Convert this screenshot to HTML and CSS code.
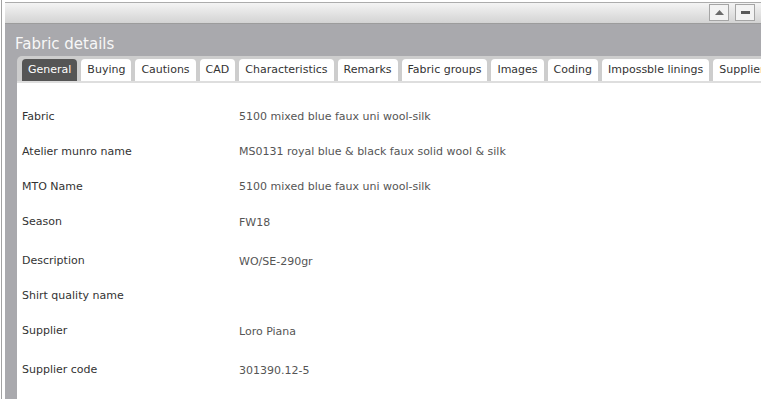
FILE: index.html
```html
<!DOCTYPE html>
<html lang="en">
<head>
    <meta charset="UTF-8">
    <title>Fabric details</title>
    <link rel="stylesheet" href="styles.css">
</head>
<body>
    <div class="frame">
        <div class="panel">
            <div class="panel-header">
                <button class="tool-btn" title="Collapse">
                    <svg width="9" height="5" viewBox="0 0 9 5"><polygon points="0,5 4.5,0 9,5" fill="#6b6b6b"/></svg>
                </button>
                <button class="tool-btn" title="Minimize">
                    <span class="minus"></span>
                </button>
            </div>
            <div class="panel-body">
                <div class="title">Fabric details</div>
                <div class="tabs">
                    <div class="tab active">General</div>
                    <div class="tab">Buying</div>
                    <div class="tab">Cautions</div>
                    <div class="tab">CAD</div>
                    <div class="tab">Characteristics</div>
                    <div class="tab">Remarks</div>
                    <div class="tab">Fabric groups</div>
                    <div class="tab">Images</div>
                    <div class="tab">Coding</div>
                    <div class="tab">Impossble linings</div>
                    <div class="tab">Suppliers</div>
                </div>
                <div class="content">
                    <div class="row">
                        <div class="label">Fabric</div>
                        <div class="value">5100 mixed blue faux uni wool-silk</div>
                    </div>
                    <div class="row">
                        <div class="label">Atelier munro name</div>
                        <div class="value">MS0131 royal blue &amp; black faux solid wool &amp; silk</div>
                    </div>
                    <div class="row">
                        <div class="label">MTO Name</div>
                        <div class="value">5100 mixed blue faux uni wool-silk</div>
                    </div>
                    <div class="row low">
                        <div class="label">Season</div>
                        <div class="value">FW18</div>
                    </div>
                    <div class="row low spaced">
                        <div class="label">Description</div>
                        <div class="value">WO/SE-290gr</div>
                    </div>
                    <div class="row">
                        <div class="label">Shirt quality name</div>
                        <div class="value"></div>
                    </div>
                    <div class="row low">
                        <div class="label">Supplier</div>
                        <div class="value">Loro Piana</div>
                    </div>
                    <div class="row low spaced">
                        <div class="label">Supplier code</div>
                        <div class="value">301390.12-5</div>
                    </div>
                </div>
            </div>
        </div>
    </div>
</body>
</html>
```

FILE: styles.css
```css
body {
    margin: 0;
    padding: 0 0 0 1px;
    background-color: #fff;
    font-family: Verdana, "DejaVu Sans", sans-serif;
    font-size: 11px;
    overflow: hidden;
    height: 399px;
}
.frame {
    border-left: 1px solid #a3a3a3;
    padding: 2px 0 0 3px;
    height: 397px;
}
.panel {
    border-top: 1px solid #acacac;
    height: 100%;
    display: flex;
    flex-direction: column;
}
.panel-header {
    height: 20px;
    background: linear-gradient(#f4f4f4, #d3d3d3);
    border-bottom: 1px solid #9c9c9c;
    display: flex;
    justify-content: flex-end;
    align-items: flex-start;
    gap: 6px;
    padding-right: 6px;
}
.tool-btn {
    width: 20px;
    height: 17px;
    margin-top: 1px;
    padding: 0;
    border: 1px solid #a5a5a5;
    background-color: #f3f3f3;
    display: flex;
    align-items: center;
    justify-content: center;
}
.minus {
    display: block;
    width: 9px;
    height: 3px;
    background-color: #5a5a5a;
}
.panel-body {
    flex: 1;
    background-color: #a9a9ad;
    display: flex;
    flex-direction: column;
}
.title {
    color: #f7f7f7;
    font-size: 15px;
    line-height: 19px;
    padding: 11px 0 2px 10px;
}
.tabs {
    display: flex;
    flex-wrap: nowrap;
    gap: 4px;
    margin-left: 12px;
    background-color: #cdcdcd;
    border-top-left-radius: 5px;
    padding: 3px 0 0 5px;
    border-bottom: 2px solid #dedede;
    overflow: hidden;
}
.tab {
    flex: none;
    height: 22px;
    line-height: 22px;
    padding: 0 6px;
    background-color: #fff;
    color: #333;
    border-radius: 4px 4px 0 0;
}
.tab.active {
    background-color: #555;
    color: #fff;
}
.content {
    flex: 1;
    margin-left: 12px;
    background-color: #fff;
    padding-top: 16px;
}
.row {
    display: flex;
    align-items: center;
    height: 35px;
}
.row.spaced {
    margin-top: 4px;
}
.label {
    width: 217px;
    padding-left: 5px;
    color: #333;
}
.value {
    color: #555;
}
.row.low .value {
    padding-top: 2px;
}
```
